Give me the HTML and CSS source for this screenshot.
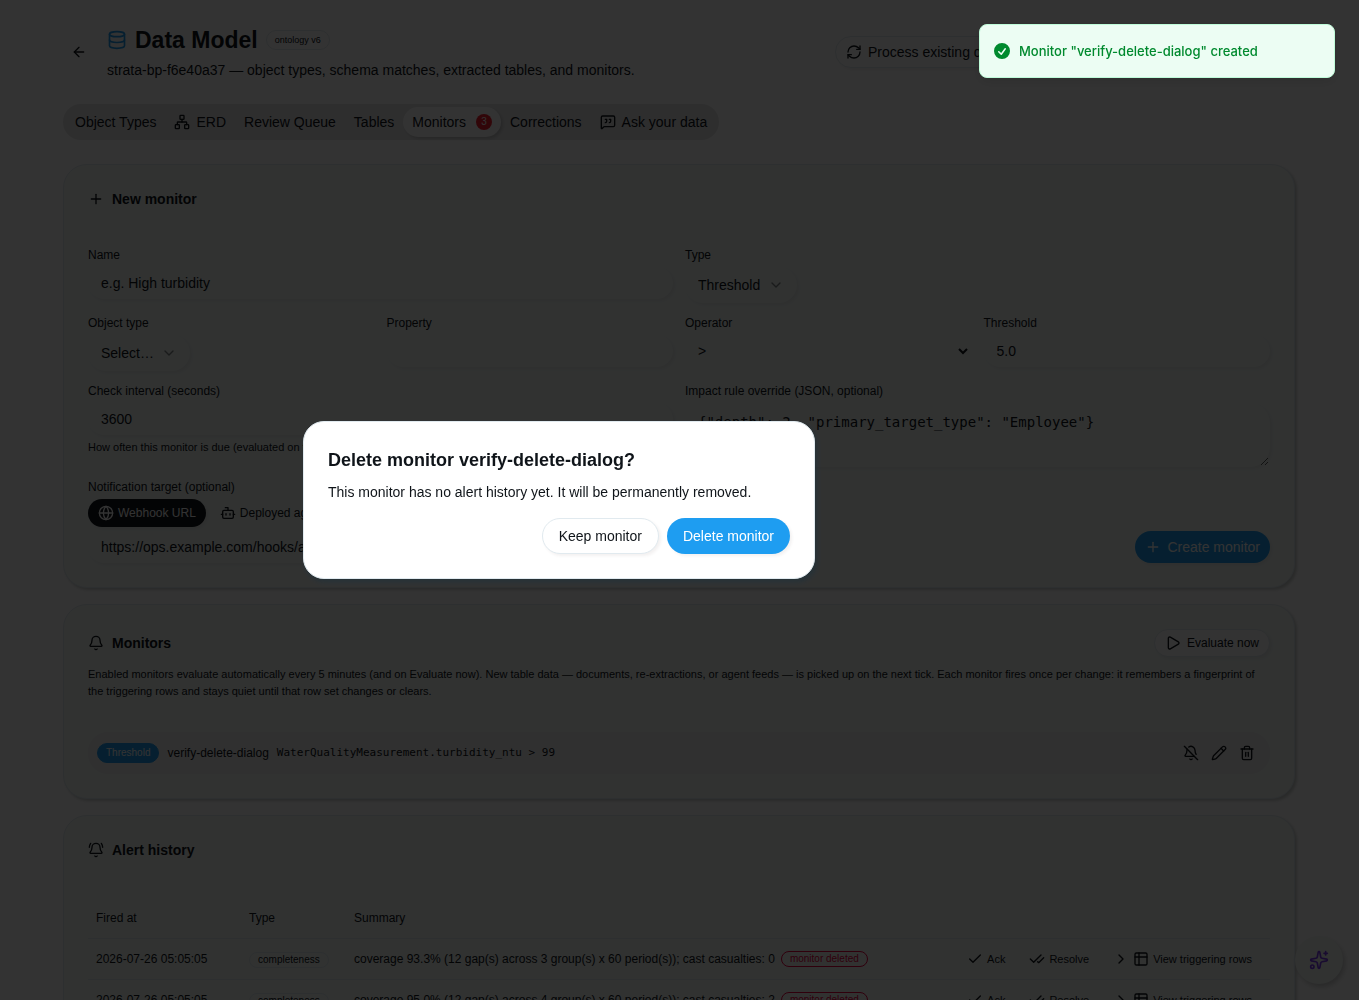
FILE: index.html
```html
<!DOCTYPE html>
<html lang="en">
<head>
    <meta charset="UTF-8">
    <meta name="viewport" content="width=device-width, initial-scale=1.0">
    <title>Data Model</title>
    <link rel="stylesheet" href="styles.css">
</head>
<body>
    <!-- icon set, 24x24 strokes -->
    <svg class="sprite" aria-hidden="true">
        <symbol id="i-arrow-left" viewBox="0 0 24 24"><path d="m12 19-7-7 7-7"/><path d="M19 12H5"/></symbol>
        <symbol id="i-database" viewBox="0 0 24 24"><ellipse cx="12" cy="5" rx="9" ry="3"/><path d="M3 5v14a9 3 0 0 0 18 0V5"/><path d="M3 12a9 3 0 0 0 18 0"/></symbol>
        <symbol id="i-refresh" viewBox="0 0 24 24"><path d="M3 12a9 9 0 0 1 9-9 9.75 9.75 0 0 1 6.74 2.74L21 8"/><path d="M21 3v5h-5"/><path d="M21 12a9 9 0 0 1-9 9 9.75 9.75 0 0 1-6.74-2.74L3 16"/><path d="M8 16H3v5"/></symbol>
        <symbol id="i-network" viewBox="0 0 24 24"><rect x="16" y="16" width="6" height="6" rx="1"/><rect x="2" y="16" width="6" height="6" rx="1"/><rect x="9" y="2" width="6" height="6" rx="1"/><path d="M5 16v-3a1 1 0 0 1 1-1h12a1 1 0 0 1 1 1v3"/><path d="M12 12V8"/></symbol>
        <symbol id="i-quote" viewBox="0 0 24 24"><path d="M22 17a2 2 0 0 1-2 2H6.828a2 2 0 0 0-1.414.586l-2.202 2.202A.71.71 0 0 1 2 21.286V5a2 2 0 0 1 2-2h16a2 2 0 0 1 2 2z"/><path d="M14 13a2 2 0 0 0 2-2V8h-2"/><path d="M8 13a2 2 0 0 0 2-2V8H8"/></symbol>
        <symbol id="i-plus" viewBox="0 0 24 24"><path d="M5 12h14"/><path d="M12 5v14"/></symbol>
        <symbol id="i-chevron-down" viewBox="0 0 24 24"><path d="m6 9 6 6 6-6"/></symbol>
        <symbol id="i-chevron-right" viewBox="0 0 24 24"><path d="m9 18 6-6-6-6"/></symbol>
        <symbol id="i-globe" viewBox="0 0 24 24"><circle cx="12" cy="12" r="10"/><path d="M12 2a14.5 14.5 0 0 0 0 20 14.5 14.5 0 0 0 0-20"/><path d="M2 12h20"/></symbol>
        <symbol id="i-bot" viewBox="0 0 24 24"><path d="M12 8V4H8"/><rect x="4" y="8" width="16" height="12" rx="2"/><path d="M2 14h2"/><path d="M20 14h2"/><path d="M15 13v2"/><path d="M9 13v2"/></symbol>
        <symbol id="i-bell" viewBox="0 0 24 24"><path d="M10.268 21a2 2 0 0 0 3.464 0"/><path d="M3.262 15.326A1 1 0 0 0 4 17h16a1 1 0 0 0 .74-1.673C19.41 13.956 18 12.499 18 8A6 6 0 0 0 6 8c0 4.499-1.411 5.956-2.738 7.326"/></symbol>
        <symbol id="i-bell-ring" viewBox="0 0 24 24"><path d="M10.268 21a2 2 0 0 0 3.464 0"/><path d="M22 8c0-2.3-.8-4.3-2-6"/><path d="M3.262 15.326A1 1 0 0 0 4 17h16a1 1 0 0 0 .74-1.673C19.41 13.956 18 12.499 18 8A6 6 0 0 0 6 8c0 4.499-1.411 5.956-2.738 7.326"/><path d="M4 2C2.8 3.7 2 5.7 2 8"/></symbol>
        <symbol id="i-bell-off" viewBox="0 0 24 24"><path d="M10.268 21a2 2 0 0 0 3.464 0"/><path d="M17 17H4a1 1 0 0 1-.74-1.673C4.59 13.956 6 12.499 6 8a6 6 0 0 1 .258-1.742"/><path d="m2 2 20 20"/><path d="M8.668 3.01A6 6 0 0 1 18 8c0 2.687.77 4.653 1.707 6.05"/></symbol>
        <symbol id="i-play" viewBox="0 0 24 24"><path d="M5 5a2 2 0 0 1 3.008-1.728l11.997 6.998a2 2 0 0 1 .003 3.458l-12 7A2 2 0 0 1 5 19z"/></symbol>
        <symbol id="i-pencil" viewBox="0 0 24 24"><path d="M21.174 6.812a1 1 0 0 0-3.986-3.987L3.842 16.174a2 2 0 0 0-.5.83l-1.321 4.352a.5.5 0 0 0 .623.622l4.353-1.32a2 2 0 0 0 .83-.497z"/><path d="m15 5 4 4"/></symbol>
        <symbol id="i-trash" viewBox="0 0 24 24"><path d="M10 11v6"/><path d="M14 11v6"/><path d="M19 6v14a2 2 0 0 1-2 2H7a2 2 0 0 1-2-2V6"/><path d="M3 6h18"/><path d="M8 6V4a2 2 0 0 1 2-2h4a2 2 0 0 1 2 2v2"/></symbol>
        <symbol id="i-check" viewBox="0 0 24 24"><path d="M20 6 9 17l-5-5"/></symbol>
        <symbol id="i-check-check" viewBox="0 0 24 24"><path d="M18 6 7 17l-5-5"/><path d="m22 10-7.5 7.5L13 16"/></symbol>
        <symbol id="i-table" viewBox="0 0 24 24"><rect x="3" y="3" width="18" height="18" rx="2"/><path d="M9 3v18"/><path d="M3 9h18"/></symbol>
        <symbol id="i-sparkles" viewBox="0 0 24 24"><path d="M11.017 2.814a1 1 0 0 1 1.966 0l1.051 5.558a2 2 0 0 0 1.594 1.594l5.558 1.051a1 1 0 0 1 0 1.966l-5.558 1.051a2 2 0 0 0-1.594 1.594l-1.051 5.558a1 1 0 0 1-1.966 0l-1.051-5.558a2 2 0 0 0-1.594-1.594l-5.558-1.051a1 1 0 0 1 0-1.966l5.558-1.051a2 2 0 0 0 1.594-1.594z"/><path d="M20 2v4"/><path d="M22 4h-4"/><circle cx="4" cy="20" r="2"/></symbol>
    </svg>

    <main class="page">
        <header class="page-header">
            <button class="back" type="button" aria-label="Back"><svg class="icon"><use href="#i-arrow-left"/></svg></button>
            <div class="page-heading">
                <h1><svg class="icon icon-title"><use href="#i-database"/></svg>Data Model <span class="version">ontology v6</span></h1>
                <p>strata-bp-f6e40a37 — object types, schema matches, extracted tables, and monitors.</p>
            </div>
            <div class="page-actions">
                <button class="btn btn-outline" type="button"><svg class="icon"><use href="#i-refresh"/></svg>Process existing documents</button>
            </div>
        </header>

        <nav class="tabs" role="tablist">
            <button type="button" role="tab">Object Types</button>
            <button type="button" role="tab"><svg class="icon"><use href="#i-network"/></svg>ERD</button>
            <button type="button" role="tab">Review Queue</button>
            <button type="button" role="tab">Tables</button>
            <button type="button" role="tab" class="active" aria-selected="true">Monitors <span class="count">3</span></button>
            <button type="button" role="tab">Corrections</button>
            <button type="button" role="tab"><svg class="icon"><use href="#i-quote"/></svg>Ask your data</button>
        </nav>

        <div class="cards">
            <section class="card">
                <div class="card-header">
                    <h2><svg class="icon"><use href="#i-plus"/></svg>New monitor</h2>
                </div>
                <form class="monitor-form">
                    <div class="field wide">
                        <label for="name">Name</label>
                        <input class="input" id="name" type="text" placeholder="e.g. High turbidity">
                    </div>
                    <div class="field wide">
                        <label for="type">Type</label>
                        <div class="picker">
                            <select id="type"><option>Threshold</option></select>
                            <svg class="icon"><use href="#i-chevron-down"/></svg>
                        </div>
                    </div>
                    <div class="field">
                        <label for="object-type">Object type</label>
                        <div class="picker">
                            <select id="object-type"><option>Select…</option></select>
                            <svg class="icon"><use href="#i-chevron-down"/></svg>
                        </div>
                    </div>
                    <div class="field">
                        <label for="property">Property</label>
                        <input class="input" id="property" type="text">
                    </div>
                    <div class="field">
                        <label for="operator">Operator</label>
                        <select class="operator" id="operator"><option>&gt;</option></select>
                    </div>
                    <div class="field">
                        <label for="threshold">Threshold</label>
                        <input class="input" id="threshold" type="text" placeholder="5.0">
                    </div>
                    <div class="field wide">
                        <label for="interval">Check interval (seconds)</label>
                        <input class="input" id="interval" type="text" value="3600">
                        <p class="hint">How often this monitor is due (evaluated on the next tick).</p>
                    </div>
                    <div class="field wide">
                        <label for="impact">Impact rule override (JSON, optional)</label>
                        <textarea class="input" id="impact" placeholder='{"depth": 2, "primary_target_type": "Employee"}'></textarea>
                    </div>
                    <div class="field wide">
                        <label for="target">Notification target (optional)</label>
                        <div class="targets">
                            <button class="btn btn-sm btn-dark" type="button"><svg class="icon"><use href="#i-globe"/></svg>Webhook URL</button>
                            <button class="btn btn-sm" type="button"><svg class="icon"><use href="#i-bot"/></svg>Deployed agent</button>
                        </div>
                        <input class="input" id="target" type="url" placeholder="https://ops.example.com/hooks/alerts">
                    </div>
                    <div class="submit wide">
                        <button class="btn btn-primary" type="button"><svg class="icon"><use href="#i-plus"/></svg>Create monitor</button>
                    </div>
                </form>
            </section>

            <section class="card">
                <div class="card-header has-text">
                    <div class="card-title">
                        <h2><svg class="icon"><use href="#i-bell"/></svg>Monitors</h2>
                        <button class="btn btn-xs btn-outline" type="button"><svg class="icon"><use href="#i-play"/></svg>Evaluate now</button>
                    </div>
                    <p>Enabled monitors evaluate automatically every 5 minutes (and on Evaluate now). New table data — documents, re-extractions, or agent feeds — is picked up on the next tick. Each monitor fires once per change: it remembers a fingerprint of the triggering rows and stays quiet until that row set changes or clears.</p>
                </div>
                <div class="monitor">
                    <span class="badge badge-primary">Threshold</span>
                    <span class="monitor-name">verify-delete-dialog</span>
                    <code>WaterQualityMeasurement.turbidity_ntu &gt; 99</code>
                    <div class="monitor-actions">
                        <button type="button" aria-label="Mute"><svg class="icon"><use href="#i-bell-off"/></svg></button>
                        <button type="button" aria-label="Edit"><svg class="icon"><use href="#i-pencil"/></svg></button>
                        <button type="button" aria-label="Delete"><svg class="icon"><use href="#i-trash"/></svg></button>
                    </div>
                </div>
            </section>

            <section class="card">
                <div class="card-header">
                    <h2><svg class="icon"><use href="#i-bell-ring"/></svg>Alert history</h2>
                </div>
                <table class="alerts">
                    <thead>
                        <tr><th class="col-fired">Fired at</th><th class="col-type">Type</th><th>Summary</th><th></th></tr>
                    </thead>
                    <tbody>
                        <tr>
                            <td>2026-07-26 05:05:05</td>
                            <td><span class="badge">completeness</span></td>
                            <td><div class="summary">coverage 93.3% (12 gap(s) across 3 group(s) x 60 period(s)); cast casualties: 0 <span class="badge badge-danger">monitor deleted</span></div></td>
                            <td>
                                <div class="row-actions">
                                    <button type="button"><svg class="icon"><use href="#i-check"/></svg>Ack</button>
                                    <button type="button"><svg class="icon"><use href="#i-check-check"/></svg>Resolve</button>
                                    <button type="button"><svg class="icon"><use href="#i-chevron-right"/></svg><svg class="icon"><use href="#i-table"/></svg>View triggering rows</button>
                                </div>
                            </td>
                        </tr>
                        <tr>
                            <td>2026-07-26 05:05:05</td>
                            <td><span class="badge">completeness</span></td>
                            <td><div class="summary">coverage 95.0% (12 gap(s) across 4 group(s) x 60 period(s)); cast casualties: 2 <span class="badge badge-danger">monitor deleted</span></div></td>
                            <td>
                                <div class="row-actions">
                                    <button type="button"><svg class="icon"><use href="#i-check"/></svg>Ack</button>
                                    <button type="button"><svg class="icon"><use href="#i-check-check"/></svg>Resolve</button>
                                    <button type="button"><svg class="icon"><use href="#i-chevron-right"/></svg><svg class="icon"><use href="#i-table"/></svg>View triggering rows</button>
                                </div>
                            </td>
                        </tr>
                    </tbody>
                </table>
            </section>
        </div>
    </main>

    <button class="assistant" type="button" aria-label="Assistant"><svg class="icon"><use href="#i-sparkles"/></svg></button>

    <div class="overlay">
        <div class="dialog" role="alertdialog" aria-modal="true" aria-labelledby="dialog-title">
            <h2 id="dialog-title">Delete monitor verify-delete-dialog?</h2>
            <p>This monitor has no alert history yet. It will be permanently removed.</p>
            <div class="dialog-actions">
                <button class="btn btn-lg btn-outline" type="button">Keep monitor</button>
                <button class="btn btn-lg btn-primary" type="button">Delete monitor</button>
            </div>
        </div>
    </div>

    <div class="toast" role="status">
        <svg viewBox="0 0 20 20" fill="currentColor"><path fill-rule="evenodd" d="M10 18a8 8 0 100-16 8 8 0 000 16zm3.857-9.809a.75.75 0 00-1.214-.882l-3.483 4.79-1.88-1.88a.75.75 0 10-1.06 1.061l2.5 2.5a.75.75 0 001.137-.089l4-5.5z" clip-rule="evenodd"/></svg>
        <span>Monitor "verify-delete-dialog" created</span>
    </div>
</body>
</html>
```
FILE: styles.css
```css
:root {
    --text: #0f1419;
    --card: #f3f9f6;
    --border: #e1eaef;
    --primary: #1e9df1;
    --muted: #e5e5e6;
    --danger: #f4212e;
    --shadow: 2px 2px 3px rgba(90, 50, 50, 0.07);
}

* {
    box-sizing: border-box;
}

body {
    margin: 0;
    height: 100vh;
    overflow: hidden; /* locked while the dialog is open */
    background: #fff;
    color: var(--text);
    font: 14px/20px "Liberation Sans", Arial, sans-serif;
}

h1, h2, p {
    margin: 0;
}

button, input, select, textarea {
    font: inherit;
    color: inherit;
}

button {
    padding: 0;
    border: 0;
    background: none;
    white-space: nowrap;
}

.sprite {
    display: none;
}

.icon {
    flex: none;
    width: 16px;
    height: 16px;
    fill: none;
    stroke: currentColor;
    stroke-width: 2;
    stroke-linecap: round;
    stroke-linejoin: round;
}

.page {
    max-width: 1281px;
    margin: 0 auto;
    padding: 24px 25px 24px 24px;
}

/* header */
.page-header {
    display: flex;
    align-items: center;
    gap: 12px;
    margin-bottom: 24px;
}

.back {
    display: grid;
    place-items: center;
    width: 32px;
    height: 32px;
}

.page-heading {
    flex: 1;
}

.page-heading h1 {
    display: flex;
    align-items: center;
    gap: 8px;
    font-size: 23px;
    line-height: 32px;
}

.page-heading p {
    margin-top: 4px;
}

.icon-title {
    width: 20px;
    height: 20px;
    color: var(--primary);
}

.version {
    padding: 0 8px;
    border: 1px solid var(--border);
    border-radius: 20px;
    font-size: 9px;
    font-weight: 400;
    line-height: 18px;
}

.page-actions {
    display: flex;
    flex: 0 0 460px;
    gap: 8px;
}

/* buttons */
.btn {
    display: inline-flex;
    align-items: center;
    gap: 6px;
    height: 32px;
    padding: 0 10px;
    border-radius: 20px;
}

.btn-sm {
    gap: 4px;
    height: 28px;
    font-size: 12px;
}

.btn-xs {
    height: 28px;
    font-size: 12px;
}

.btn-lg {
    height: 36px;
    padding: 0 16px;
}

.btn-outline {
    border: 1px solid var(--border);
    background: #fff;
    box-shadow: var(--shadow);
}

.btn-primary {
    background: var(--primary);
    color: #fff;
    box-shadow: var(--shadow);
}

.btn-dark {
    background: var(--text);
    color: #fff;
    box-shadow: var(--shadow);
}

/* tabs */
.tabs {
    display: inline-flex;
    height: 36px;
    margin-bottom: 24px;
    padding: 3px;
    border-radius: 20px;
    background: var(--muted);
    vertical-align: top;
}

.tabs button {
    display: flex;
    align-items: center;
    gap: 6px;
    padding: 0 9px;
    border-radius: 20px;
}

.tabs .active {
    background: #fff;
    box-shadow: 2px 2px 3px rgba(0, 0, 0, 0.15);
}

.count {
    width: 16px;
    margin-left: 4px;
    border-radius: 50%;
    background: var(--danger);
    color: #fff;
    font-size: 10px;
    line-height: 16px;
    text-align: center;
}

/* cards */
.cards {
    display: grid;
    gap: 16px;
}

.card {
    padding: 24px;
    border: 1px solid var(--border);
    border-radius: 24px;
    background: var(--card);
    box-shadow: 2px 2px 3px rgba(0, 20, 10, 0.2);
}

.card-header {
    margin-bottom: 38px;
}

.card-header.has-text {
    margin-bottom: 32px;
}

.card-header h2 {
    display: flex;
    align-items: center;
    gap: 8px;
    font-size: 14px;
}

.card-title {
    display: flex;
    align-items: center;
    justify-content: space-between;
    margin-bottom: 9px;
}

.card-header p {
    font-size: 11px;
    line-height: 17px;
}

/* new monitor form */
.monitor-form {
    display: grid;
    grid-template-columns: repeat(4, 1fr);
    gap: 12px;
}

.wide {
    grid-column: span 2;
}

.field {
    display: flex;
    flex-direction: column;
    gap: 4px;
}

.field label {
    font-size: 12px;
    line-height: 16px;
}

.hint {
    font-size: 11px;
    line-height: 16px;
}

.input {
    width: 100%;
    height: 32px;
    padding: 0 12px;
    border: 1px solid transparent;
    border-radius: 20px;
    background: var(--card);
    box-shadow: var(--shadow);
}

.input::placeholder {
    color: var(--text);
    opacity: 1;
}

textarea.input {
    height: 64px;
    padding: 8px 12px;
    font-family: "DejaVu Sans Mono", monospace;
}

.picker {
    position: relative;
    align-self: flex-start;
}

.picker select {
    height: 36px;
    padding: 0 35px 0 12px;
    border: 1px solid transparent;
    border-radius: 20px;
    background: var(--card);
    box-shadow: var(--shadow);
    appearance: none;
}

.picker .icon {
    position: absolute;
    top: 10px;
    right: 13px;
    opacity: 0.5;
    pointer-events: none;
}

.operator {
    height: 32px;
    padding: 0 0 0 8px;
    border: 1px solid transparent;
    background: transparent;
}

.targets {
    display: flex;
    gap: 4px;
}

.submit {
    display: flex;
    align-items: flex-end;
    justify-content: flex-end;
}

/* monitor list */
.monitor {
    display: flex;
    align-items: center;
    gap: 8px;
    padding: 6px 8px;
    border: 1px solid #efefef;
    border-radius: 20px;
    background: #f1f0f0;
}

.monitor-name {
    font-size: 12px;
}

.monitor code {
    font: 11px/16px "DejaVu Sans Mono", monospace;
}

.monitor-actions {
    display: flex;
    margin-left: auto;
}

.monitor-actions button {
    display: grid;
    place-items: center;
    width: 28px;
    height: 28px;
}

.badge {
    display: inline-block;
    padding: 0 8px;
    border: 1px solid var(--border);
    border-radius: 20px;
    font-size: 10px;
    line-height: 14px;
}

.badge-primary {
    border-color: var(--primary);
    background: var(--primary);
    color: #fff;
    line-height: 18px;
}

.badge-danger {
    border-color: #ec003f;
    color: #ec003f;
}

/* alert history */
.alerts {
    width: 100%;
    border-collapse: collapse;
    font-size: 12px;
    white-space: nowrap;
}

.alerts th,
.alerts td {
    height: 41px;
    padding: 0 8px;
    border-bottom: 1px solid var(--border);
    text-align: left;
    font-weight: 400;
}

.alerts th {
    height: 40px;
}

.col-fired {
    width: 153px;
}

.col-type {
    width: 105px;
}

.summary {
    display: flex;
    align-items: center;
    gap: 6px;
}

.row-actions {
    display: flex;
    justify-content: flex-end;
    gap: 4px;
}

.row-actions button {
    display: flex;
    align-items: center;
    gap: 4px;
    height: 28px;
    padding: 0 10px;
    font-size: 11px;
}

/* floating layers */
.assistant {
    position: fixed;
    right: 16px;
    bottom: 16px;
    display: grid;
    place-items: center;
    width: 48px;
    height: 48px;
    border-radius: 50%;
    background: var(--card);
    color: #7c3aed;
    box-shadow: 2px 3px 5px rgba(0, 0, 0, 0.2);
}

.assistant .icon {
    width: 20px;
    height: 20px;
}

.overlay {
    position: fixed;
    inset: 0;
    display: flex;
    align-items: center;
    justify-content: center;
    padding-right: 241px;
    background: rgba(0, 0, 0, 0.8);
}

.dialog {
    width: 512px;
    padding: 24px;
    border: 1px solid var(--border);
    border-radius: 21px;
    background: #fff;
    box-shadow: 2px 3px 5px rgba(20, 50, 65, 0.4);
}

.dialog h2 {
    margin-bottom: 8px;
    font-size: 18px;
    line-height: 28px;
}

.dialog-actions {
    display: flex;
    justify-content: flex-end;
    gap: 8px;
    margin-top: 16px;
}

.toast {
    position: fixed;
    top: 24px;
    right: 24px;
    display: flex;
    align-items: center;
    gap: 7px;
    width: 356px;
    padding: 16px 12px;
    border: 1px solid #bffcd9;
    border-radius: 8px;
    background: #ecfdf3;
    color: #008a2e;
    font: 500 13px/20px Inter, sans-serif;
    box-shadow: 0 4px 12px rgba(0, 0, 0, 0.1);
}

.toast svg {
    width: 20px;
    height: 20px;
}
```
